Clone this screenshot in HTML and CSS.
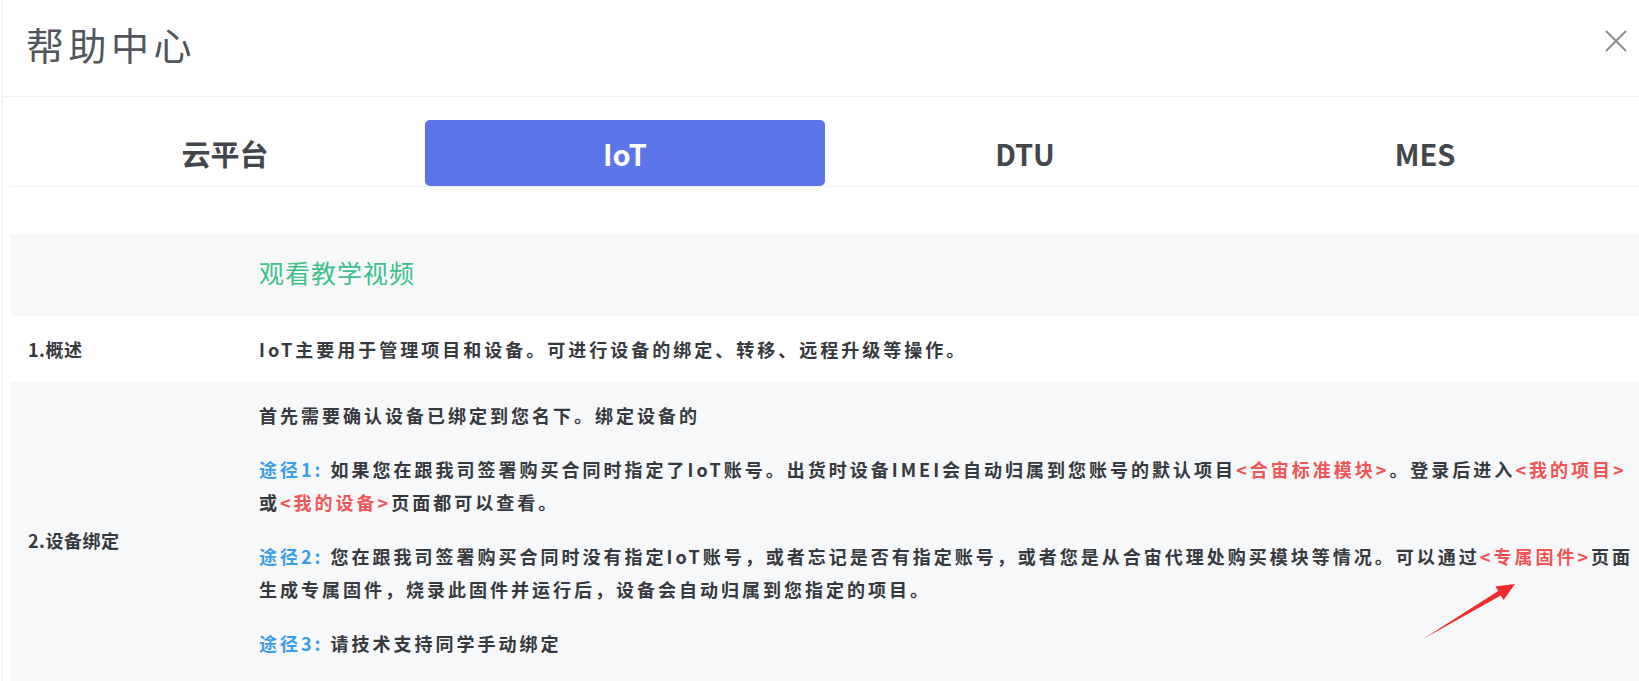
FILE: index.html
```html
<!DOCTYPE html>
<html lang="zh-CN">
<head>
    <meta charset="UTF-8">
    <meta name="viewport" content="width=device-width, initial-scale=1.0">
    <title>帮助中心</title>
    <link rel="stylesheet" href="styles.css">
</head>
<body>
    <div class="modal">
        <div class="header">
            <h1>帮助中心</h1>
            <button class="close" aria-label="close">
                <svg width="22" height="22" viewBox="0 0 22 22"><path d="M1 1L21 21M21 1L1 21" stroke="#8a8e93" stroke-width="1.8" fill="none"/></svg>
            </button>
        </div>

        <div class="content">
            <div class="tabs">
                <div class="tab">云平台</div>
                <div class="tab active">IoT</div>
                <div class="tab">DTU</div>
                <div class="tab">MES</div>
            </div>

            <div class="help-table">
                <div class="row gray video-row">
                    <div class="label"></div>
                    <div class="text"><a class="video">观看教学视频</a></div>
                </div>
                <div class="row">
                    <div class="label">1.概述</div>
                    <div class="text">IoT主要用于管理项目和设备。可进行设备的绑定、转移、远程升级等操作。</div>
                </div>
                <div class="row gray tall">
                    <div class="label">2.设备绑定</div>
                    <div class="text">
                        <p>首先需要确认设备已绑定到您名下。绑定设备的</p>
                        <p><span class="way">途径1:</span> 如果您在跟我司签署购买合同时指定了IoT账号。出货时设备IMEI会自动归属到您账号的默认项目<span class="link">&lt;合宙标准模块&gt;</span>。登录后进入<span class="link">&lt;我的项目&gt;</span><br>或<span class="link">&lt;我的设备&gt;</span>页面都可以查看。</p>
                        <p><span class="way">途径2:</span> 您在跟我司签署购买合同时没有指定IoT账号，或者忘记是否有指定账号，或者您是从合宙代理处购买模块等情况。可以通过<span class="link">&lt;专属固件&gt;</span>页面<br>生成专属固件，烧录此固件并运行后，设备会自动归属到您指定的项目。</p>
                        <p><span class="way">途径3:</span> 请技术支持同学手动绑定</p>
                    </div>
                    <svg class="arrow" width="120" height="80" viewBox="0 0 120 80">
                        <polygon points="13,65 88.2,17.1 85.4,12.4 105,10 93.6,26.1 90.8,21.4" fill="#f22b2b"/>
                    </svg>
                </div>
            </div>
        </div>
    </div>
</body>
</html>
```

FILE: styles.css
```css
body {
    margin: 0;
    background: #fff;
    font-family: "Noto Sans CJK SC", "Noto Sans", sans-serif;
    color: #333;
    overflow: hidden;
}
.modal {
    margin-left: 2px;
    border-left: 1px solid #eceef0;
    min-height: 100vh;
}
.header {
    height: 96px;
    border-bottom: 1px solid #f0f1f3;
    display: flex;
    justify-content: space-between;
    align-items: flex-start;
    padding: 0 12px 0 23px;
}
.header h1 {
    margin: 19px 0 0;
    font-size: 38px;
    line-height: 50px;
    font-weight: normal;
    letter-spacing: 4.5px;
    color: #50565c;
}
.close {
    margin-top: 30px;
    background: none;
    border: none;
    padding: 0;
    cursor: pointer;
}
.content {
    padding-left: 8px;
}
.tabs {
    display: grid;
    grid-template-columns: repeat(4, 1fr);
    padding: 23px 14px 0;
    border-bottom: 1px solid #eef0f3;
}
.tab {
    height: 66px;
    line-height: 66px;
    text-align: center;
    font-size: 29px;
    font-weight: bold;
    color: #43474c;
    border-radius: 5px;
    cursor: pointer;
}
.tab.active {
    background: #5b74e8;
    color: #fff;
}
.help-table {
    margin-top: 47px;
}
.row {
    display: grid;
    grid-template-columns: 248px 1fr;
    align-items: center;
    min-height: 66px;
    font-size: 18px;
    font-weight: bold;
    letter-spacing: 3px;
    position: relative;
}
.row.gray {
    background: #f7f8fa;
}
.video-row {
    height: 82px;
}
.video-row .text {
    padding-bottom: 6px;
}
.label {
    padding-left: 17px;
    color: #36393d;
    letter-spacing: 0.5px;
}
.text {
    color: #36393d;
}
.video {
    font-size: 25px;
    font-weight: normal;
    letter-spacing: 1px;
    color: #3ec08d;
    cursor: pointer;
}
.tall .text {
    padding-top: 17px;
    padding-bottom: 17px;
}
.tall p {
    margin: 0 0 21px;
    line-height: 33px;
}
.way {
    color: #3a9cec;
}
.link {
    color: #f15555;
}
.arrow {
    position: absolute;
    left: 1399px;
    top: 192px;
}
```
